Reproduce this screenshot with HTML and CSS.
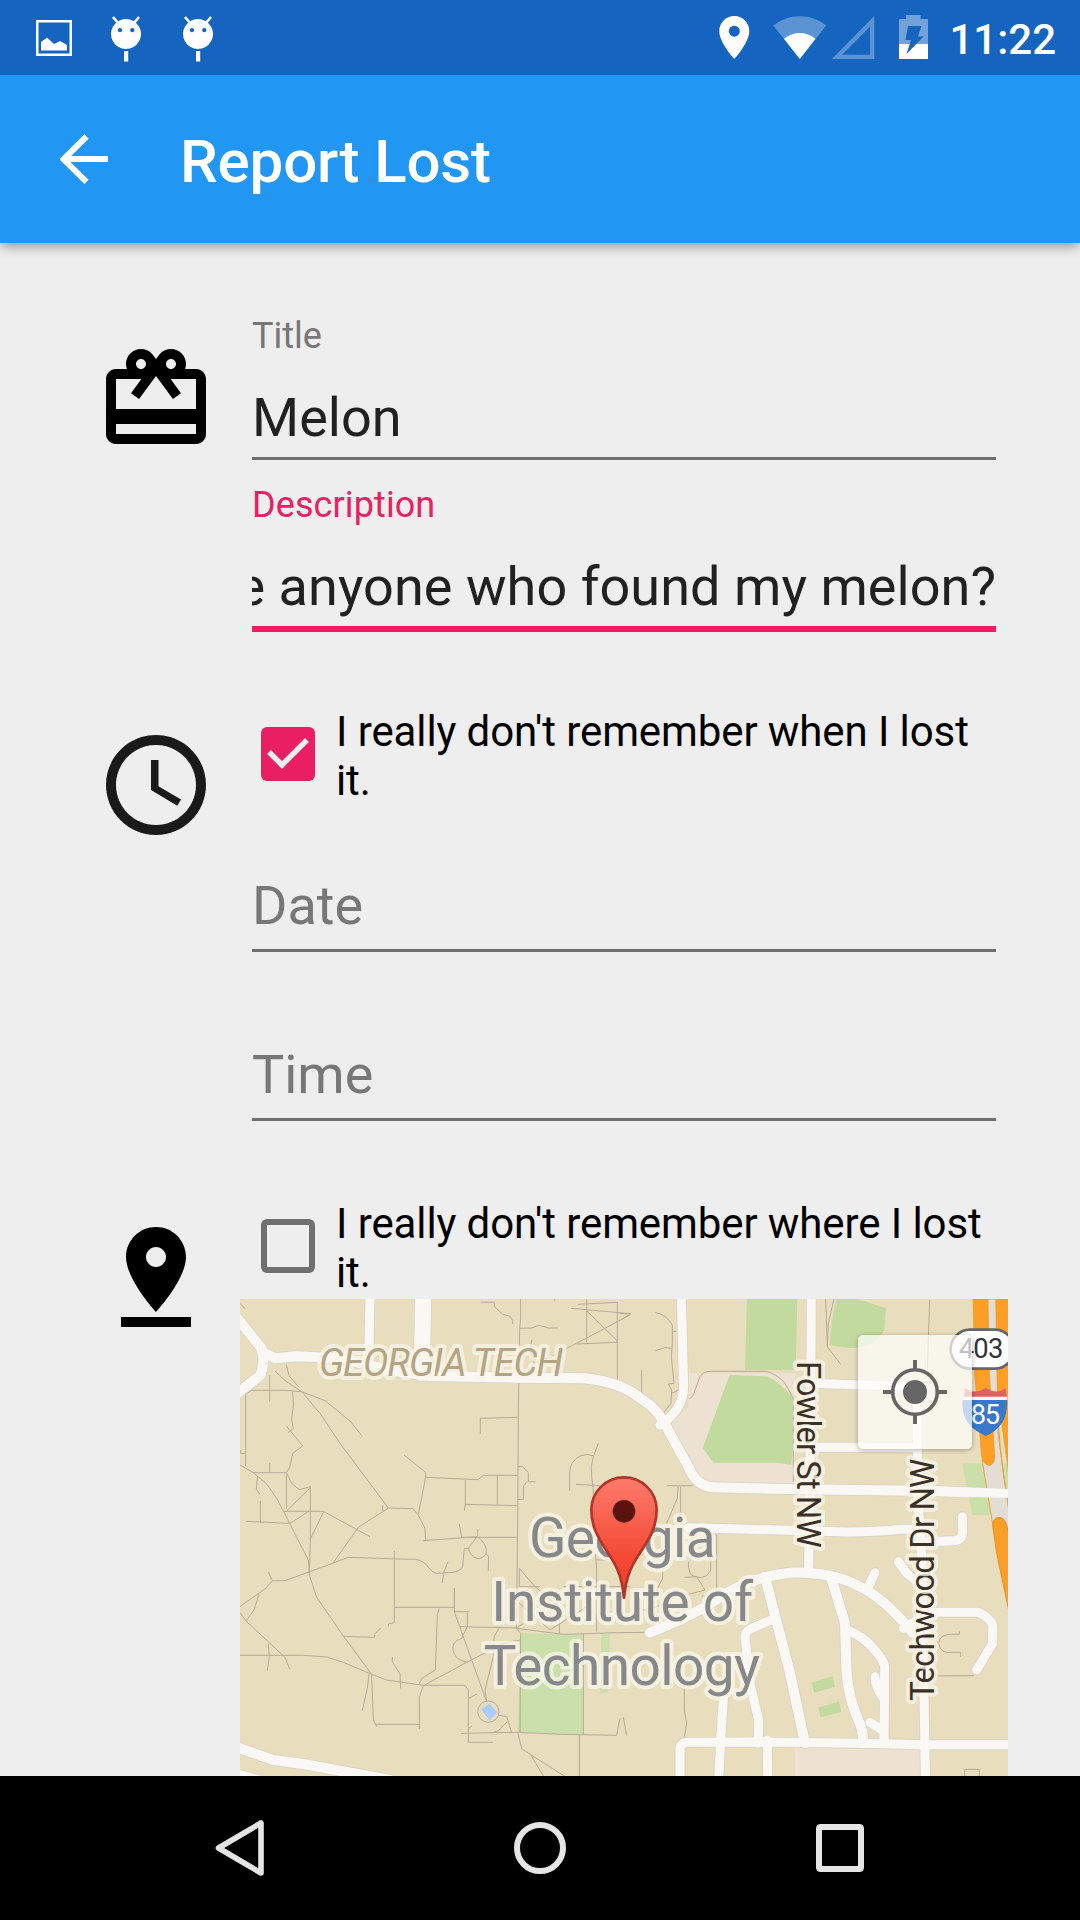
FILE: index.html
```html
<!DOCTYPE html>
<html lang="en">
<head>
<meta charset="utf-8">
<title>Report Lost</title>
<link rel="stylesheet" href="styles.css">
</head>
<body>
<div class="screen">
  <div class="status-bar">
    <div class="notifications">
      <svg width="36" height="36" viewBox="0 0 36 36"><path fill="#fff" fill-rule="evenodd" d="M0 0h36v36H0zM2.5 2.500v31h31v-31zM5 22l6-4.500 7 6.500 6-3 7 4v5.500H5z"/></svg>
      <svg class="debug" width="30" height="46" viewBox="0 0 30 46"><g fill="#fff"><path d="M2 1l5 6M28 1l-5 6" stroke="#fff" stroke-width="2.600"/><path fill-rule="evenodd" d="M15 3a15 15 0 1 0 .01 0zM9 12a2.100 2.100 0 1 1-.01 0zM21.300 12a2.100 2.100 0 1 1-.01 0z"/><path d="M13 35h4.200v10.500H13z"/></g></svg>
      <svg class="debug" width="30" height="46" viewBox="0 0 30 46"><g fill="#fff"><path d="M2 1l5 6M28 1l-5 6" stroke="#fff" stroke-width="2.600"/><path fill-rule="evenodd" d="M15 3a15 15 0 1 0 .01 0zM9 12a2.100 2.100 0 1 1-.01 0zM21.300 12a2.100 2.100 0 1 1-.01 0z"/><path d="M13 35h4.200v10.500H13z"/></g></svg>
    </div>
    <div class="indicators">
      <svg class="ind-pin" width="31" height="43" viewBox="0 0 31 43"><path fill="#fff" fill-rule="evenodd" d="M15.300 0C6.800 0 .3 6.700.3 15.200.3 26.500 15.300 43 15.300 43s15-16.500 15-27.800C30.300 6.700 23.800 0 15.300 0zm0 9.700a5.500 5.500 0 1 1 0 11 5.500 5.500 0 0 1 0-11z"/></svg>
      <svg class="ind-wifi" width="54" height="43" viewBox="0 0 54 43"><path fill="#fff" fill-opacity=".3" d="M.3 9.500C8 3.500 17 .2 26.800 .2S45.700 3.500 53.300 9.500L26.800 43z"/><path fill="#fff" d="M11 22.700c9.500-7.500 22-7.500 31.500 0L26.800 43z"/></svg>
      <svg class="ind-cell" width="43" height="43" viewBox="0 0 43 43"><path fill="#fff" fill-opacity=".3" fill-rule="evenodd" d="M0 43L42.300 0v43zM10 38.700h28V10.700z"/></svg>
      <svg class="ind-battery" width="29" height="44" viewBox="0 0 29 44"><path fill="#fff" fill-opacity=".4" d="M7 0h14.500v4H29v25H0V4h7z"/><path fill="#fff" d="M0 29h29v15H0z"/><path fill="#1565c0" d="M9 11h13.500L19 21.500h5.500L7.500 39l4.500-14H6.500z"/></svg>
      <span class="clock">11:22</span>
    </div>
  </div>

  <header class="app-bar">
    <svg class="back" width="48" height="50" viewBox="0 0 48 50"><path d="M48 25H5M26.500 2.500L3.500 25.300l23 22.500" fill="none" stroke="#fff" stroke-width="6"/></svg>
    <h1>Report Lost</h1>
  </header>

  <main class="form">
    <section class="section section-item">
      <svg class="section-icon" viewBox="0 0 24 24"><path d="M20 6h-2.180c.11-.31.18-.65.18-1 0-1.660-1.340-3-3-3-1.050 0-1.960.54-2.500 1.350l-.5.67-.5-.68C10.960 2.540 10.050 2 9 2 7.340 2 6 3.340 6 5c0 .35.07.69.18 1H4c-1.110 0-1.990.89-1.990 2L2 19c0 1.110.89 2 2 2h16c1.110 0 2-.89 2-2V8c0-1.110-.89-2-2-2zm-5-2c.55 0 1 .45 1 1s-.45 1-1 1-1-.45-1-1 .45-1 1-1zM9 4c.55 0 1 .45 1 1s-.45 1-1 1-1-.45-1-1 .45-1 1-1zm11 15H4v-2h16v2zm0-5H4V8h5.080L7 10.830 8.620 12 11 8.760l1-1.360 1 1.360L15.380 12 17 10.830 14.920 8H20v6z"/></svg>
      <div class="fields">
        <div class="field">
          <div class="label">Title</div>
          <div class="value">Melon</div>
        </div>
        <div class="field focused">
          <div class="label">Description</div>
          <div class="value">e anyone who found my melon?</div>
        </div>
      </div>
    </section>

    <section class="section section-when">
      <svg class="section-icon soft" viewBox="0 0 24 24"><path d="M11.990 2C6.470 2 2 6.480 2 12s4.470 10 9.990 10C17.520 22 22 17.520 22 12S17.520 2 11.990 2zM12 20c-4.420 0-8-3.580-8-8s3.580-8 8-8 8 3.580 8 8-3.580 8-8 8zm.5-13H11v6l5.250 3.150.75-1.230-4.500-2.670z"/></svg>
      <div class="fields">
        <div class="check-row">
          <svg class="box" width="54" height="54" viewBox="0 0 54 54"><rect width="54" height="54" rx="6" fill="#e91e63"/><path d="M8 25l13 13L46 13" fill="none" stroke="#eee" stroke-width="5.500"/></svg>
          <div class="check-text">I really don't remember when I lost it.</div>
        </div>
        <div class="field field-date"><div class="value hint">Date</div></div>
        <div class="field"><div class="value hint">Time</div></div>
      </div>
    </section>

    <section class="section section-where">
      <svg class="section-icon" viewBox="0 0 24 24"><path d="M18 8c0-3.310-2.690-6-6-6S6 4.690 6 8c0 4.500 6 11 6 11s6-6.500 6-11zm-8 0c0-1.100.9-2 2-2s2 .9 2 2-.89 2-2 2c-1.100 0-2-.9-2-2zM5 20v2h14v-2H5z"/></svg>
      <div class="fields">
        <div class="check-row">
          <div class="box box-empty"></div>
          <div class="check-text">I really don't remember where I lost it.</div>
        </div>
        <div class="map">
          <svg class="map-canvas" viewBox="30 27 2304 1431" width="768" height="477">
            <defs>
              <linearGradient id="pin" x1="0" y1="0" x2="0" y2="1"><stop offset="0" stop-color="#fd7b6c"/><stop offset=".65" stop-color="#f44a36"/><stop offset="1" stop-color="#f03a28"/></linearGradient>
              <g id="streets">
                <path class="st-l" d="M10 70L95 175Q105 215 92 255L10 320"/>
                <path class="st-l" d="M95 185L135 205L200 199L330 205L400 222L500 244L600 258L860 263L1060 265Q1150 272 1210 310L1260 345Q1290 370 1320 430L1375 530Q1400 590 1450 592L1720 598L2110 603L2340 612"/>
                <path d="M420 20L418 110L416 225"/>
                <path class="st-xl" d="M579 20L578 110L575 250"/>
                <path d="M1354 20L1361 290Q1360 360 1290 405"/>
                <path d="M1744 20L1743 180L1739 600L1736 840"/>
                <path d="M1740 280L2060 290"/>
                <path d="M1740 472L2050 472"/>
                <path d="M2062 290L2062 600L2075 800L2086 1460"/>
                <path d="M1375 713L1500 716L1850 726Q1940 726 2010 718L2070 718L2068 756L2170 752Q2200 752 2197 720L2197 680"/>
                <path class="st-l" d="M1260 1028Q1400 970 1450 935Q1550 862 1680 848Q1800 845 1880 885Q1960 920 2050 1030"/>
                <path d="M1910 900L1935 848M2005 815L2030 850Q2050 868 2075 880"/>
                <path d="M2020 1015L2080 980L2110 967L2245 967Q2288 990 2288 1010L2288 1060L2240 1140"/>
                <path class="st-l" d="M1605 860L1680 1150L1725 1360"/>
                <path d="M1635 985L1565 1015Q1545 1025 1545 1040L1560 1180L1586 1290L1585 1360"/>
                <path class="st-l" d="M1805 868L1845 1000L1850 1150Q1855 1220 1885 1290Q1900 1320 1900 1360"/>
                <path d="M1850 1020Q1900 1040 1925 1070Q1962 1110 1964 1130L1962 1360M1935 1160Q1935 1190 1960 1225M1920 1297L1955 1320"/>
                <path d="M1482 1200L1472 1350L1466 1470M1612 1350L1613 1470M1350 1470L1350 1375Q1352 1358 1375 1357L1600 1356L1880 1360L2090 1364L2340 1364"/>
                <path class="st-l" d="M10 1368L130 1410L220 1422L480 1470"/>
                <path class="st-l" d="M-10 1445L120 1480"/>
              </g>
            </defs>
            <rect x="30" y="27" width="2304" height="1431" fill="#e8ddbd"/>
            <path fill="#ede2d1" d="M1375 250H1695V585H1430L1380 545 1305 420 1375 350zM1695 1374H2070V1460H1695z"/>
            <g fill="#c3da9e">
              <path d="M1551 27H1702L1697 240H1545zM1820 27H1880L1968 54 1962 120Q1935 175 1860 174L1800 166Q1803 90 1820 27zM1499 255L1610 259Q1650 275 1690 325L1692 440 1684 525 1640 518H1450L1418 473zM1745 1178L1808 1158 1815 1190 1753 1208zM1765 1253L1827 1234 1834 1266 1772 1282z"/>
            </g>
            <g fill="#cbdfaa">
              <path d="M872 1030L1060 1034 1060 1333 863 1327zM1114 1032H1140L1134 1209H1110zM2197 521H2340V675H2228z"/>
            </g>
            <path fill="#aaccff" d="M753 1258L778 1241 802 1267 779 1291z"/>

            <g class="footpath">
              <path d="M30 40L45 56M752 37H793V50L818 73L840 79L848 92V102M872 27V85L869 115L865 360L863 700L859 1015L872 1030M869 115L905 114L928 106L955 114H984M974 27V33M1023 55L1080 60L1200 71M1044 43L1162 37V267M1070 27V158M1070 62L1162 153V157L1040 162M1200 75L1030 165L960 203L915 210L900 185L905 150M910 200L912 225L935 205"/>
              <path d="M119 255V335M47 530V312L65 301H165L215 305L285 332L360 393L395 437M135 243L165 272L215 305L270 370L330 460L475 654M169 225L177 257L205 290M188 305L190 345L185 390L190 415L175 428M169 408L218 468L188 490L180 530L169 548H70L30 525M32 480V490H47M119 519V547M169 548V656M70 548L110 582L140 625L165 672L200 742L235 810L238 855L260 922L340 1038L425 1153L470 1170L580 1186H705L715 1200V1357H789"/>
              <path d="M169 548L185 580L208 599L241 590V750L238 855M241 593L170 663M82 558L79 598L89 612M91 632V697M48 694L180 700L235 665M160 664H280L420 740M280 667L240 750M458 646V664M475 654L385 712L310 818M475 654L548 656L565 675L585 715L587 750M522 495L587 547V562L745 569L760 556H862M587 562L565 672M706 569V643L862 647M706 643L703 662M802 556V643M751 432V385L862 382M863 530L878 530L895 548V575H917M890 575L880 590V628H863"/>
              <path d="M688 702L695 742H859M743 717V740M580 752L743 740Q770 760 769 788Q762 805 743 806Q720 800 715 775L740 742M715 776L703 775L698 830Q690 846 660 848L620 850Q605 847 590 825Q570 805 540 808L355 802L240 845L165 872H127L115 846M127 872L107 895L30 950M30 968L48 993L72 960L87 912M48 993L165 1102L179 1137M115 1062L118 1100L112 1142M30 1096H220L290 1101L340 1117L425 1153M493 783V998L475 1002V1010M452 1014L436 1030L433 1042L340 1039M654 816L640 850L637 880M775 843L776 800L769 790"/>
              <path d="M493 952H673V894V965L768 1230M628 955L622 975L616 1140L575 1165L568 1182M673 965H718M712 968V1010L695 1045Q665 1055 669 1080Q675 1112 712 1116M690 1010L860 1014L880 1000M580 1187L712 1116L820 1060L870 1050M808 1014L792 1040L790 1100L765 1200L770 1235M417 1153L412 1195L397 1262M425 1153L430 1290L440 1310M437 1303H568V1316V1220L580 1187M487 1101V1116L510 1152L512 1195M715 1226L740 1212M693 1330L860 1327L1000 1333L1160 1336L1170 1285M1180 1282L1190 1337M715 1318L725 1308M790 1327L805 1322L832 1295M805 1275L830 1280L845 1327M863 1327L875 1376L902 1394L940 1458M902 1394L1003 1458M1048 1335V1458M872 1030L870 1327M1060 1032V1333M859 1015L1000 1033L1160 1028L1260 1027M868 835L915 890L988 950V1030M868 835V890H930M868 940L960 1020L1070 950"/>
              <circle cx="775" cy="1265" r="32"/>
              <path d="M1105 460L1090 500Q1080 530 1085 560L1090 600V700L1100 840V1025M1090 497Q1070 490 1050 498Q1018 515 1019 550V602M1038 583L1110 587M1100 810H1180M1000 890H1200"/>
              <path d="M1170 71L1202 71L1175 88M1276 67Q1310 75 1327 105V160L1324 200L1332 280L1315 282L1325 300L1323 340L1290 383M1327 124H1340M1276 182L1305 173L1324 175M1235 240V316M1325 310L1345 300M1378 326Q1392 320 1395 300L1410 260Q1418 246 1440 244H1610Q1645 255 1665 280L1690 325V575M1787 27L1792 170L1832 223M1812 27L1795 100L1792 170M2099 30L2092 240M1310 587H1390M1344 590L1342 625L1310 700M1352 590V700L1460 735V920"/>
              <path d="M1376 815Q1372 855 1395 860Q1430 870 1442 840V815M1363 862L1400 860L1425 900L1360 917M1415 918H1450M1298 840V865L1280 900L1315 940L1240 960L1300 985M1363 1180V1260L1370 1300L1363 1340M2188 1024V1033H2160Q2128 1035 2126 1060Q2130 1084 2150 1087H2192V1101M2110 1158L2232 1157M2204 1460V1438H2248V1460"/>
            </g>

            <use href="#streets" class="casing"/>
            <use href="#streets" class="surface"/>
            <path d="M107 215l4 5-5 5z" fill="#e2d9bb"/>

            <g>
              <path d="M2262 27H2334V600L2334 720H2300L2258 530z" fill="#e8ddbd"/>
              <path d="M2197 521H2340V675H2228z" fill="#cbdfaa"/>
              <path d="M2272 27H2300L2304 430 2340 690V780L2290 715 2258 520z" fill="#e3ddd5" stroke="#eba535" stroke-width="3"/>
              <path d="M2305 400Q2315 550 2336 640" fill="none" stroke="#eba535" stroke-width="3"/>
              <path d="M2200 592L2336 597V624L2200 620z" fill="#faf8f5"/>
              <path d="M2229 20L2234 250 2255 500Q2262 527 2280 526 2296 520 2294 495L2278 250 2274 20z" fill="#fc9f27" stroke="#ec981f" stroke-width="2"/>
              <path d="M2297 20H2336V550L2318 420 2302 300z" fill="#fc9f27" stroke="#ec981f" stroke-width="2"/>
              <path d="M2288 705Q2290 682 2310 682 2328 684 2336 730V960L2300 790z" fill="#fc9f27" stroke="#e7921c" stroke-width="3"/>
            </g>

            <rect x="2162" y="119" width="190" height="117" rx="58" fill="#fff" stroke="#666" stroke-width="8"/>
            <text class="route" x="2186" y="205" textLength="134" fill="#333">403</text>
            <path d="M2205 295Q2230 315 2267 294 2302 315 2326 295L2332 330H2200z" fill="#da6262"/>
            <path d="M2201 320h131v10h-133z" fill="#fff"/>
            <path d="M2198 330H2331Q2336 408 2267 438 2190 405 2198 330z" fill="#3a78c9"/>
            <text class="route" x="2222" y="402" textLength="88" fill="#fff">85</text>

            <text class="district" x="267" y="258" textLength="732">GEORGIA TECH</text>
            <text class="street" transform="translate(1701 213) rotate(90)" textLength="560">Fowler St NW</text>
            <text class="street" transform="translate(2111 1232) rotate(-90)" textLength="726">Techwood Dr NW</text>
            <g class="place">
              <text x="897" y="800" textLength="560">Georgia</text>
              <text x="784" y="992" textLength="785">Institute of</text>
              <text x="761" y="1185" textLength="829">Technology</text>
            </g>

            <path d="M1182 926C1176 850 1155 820 1125 775 1100 735 1084 705 1084 660A98 98 0 0 1 1280 660C1280 705 1264 735 1239 775 1209 820 1188 850 1182 926z" fill="url(#pin)" stroke="#b13529" stroke-width="8"/>
            <circle cx="1182" cy="664" r="34" fill="#5a130d"/>
          </svg>
          <div class="locate">
            <svg width="64" height="64" viewBox="-32 -32 64 64"><circle r="12" fill="#666"/><circle r="22.300" fill="none" stroke="#666" stroke-width="3.600"/><path d="M0-32v9M0 23v9M-32 0h9M23 0h9" stroke="#666" stroke-width="4"/></svg>
          </div>
        </div>
      </div>
    </section>
  </main>

  <nav class="nav-bar">
    <svg width="60" height="60" viewBox="-30 -30 60 60"><path d="M-21.500 0L21-25V25z" fill="none" stroke="#e5e5e5" stroke-width="5.600" stroke-linejoin="round"/></svg>
    <svg width="60" height="60" viewBox="-30 -30 60 60"><circle r="23" fill="none" stroke="#e5e5e5" stroke-width="6"/></svg>
    <svg width="60" height="60" viewBox="-30 -30 60 60"><rect x="-21" y="-21" width="42" height="42" rx="1.500" fill="none" stroke="#e5e5e5" stroke-width="6"/></svg>
  </nav>
</div>
</body>
</html>
```
FILE: styles.css
```css
* {
  box-sizing: border-box;
}

body {
  margin: 0;
  font-family: Roboto, "Noto Sans", sans-serif;
}

svg {
  display: block;
  flex: none;
}

.screen {
  width: 1080px;
  height: 1920px;
  display: flex;
  flex-direction: column;
  overflow: hidden;
  background: #eee;
}

/* Status bar */
.status-bar {
  flex: none;
  height: 75px;
  padding: 0 24px 0 36px;
  display: flex;
  justify-content: space-between;
  position: relative;
  z-index: 1;
  background: #1565c0;
  color: #fff;
}

.notifications,
.indicators {
  display: flex;
  align-items: flex-start;
}

.notifications {
  padding-top: 20px;
  gap: 42px;
}

.notifications svg:nth-child(2) {
  margin-left: -3px;
}

.debug {
  margin-top: -4px;
}

.indicators {
  padding-top: 16px;
}

.ind-wifi {
  margin-left: 23px;
}

.ind-cell {
  margin-left: 5px;
}

.ind-battery {
  margin: -1px 0 0 24px;
}

.clock {
  margin: -1px 0 0 21px;
  font-size: 42px;
  line-height: 49px;
  font-weight: 500;
}

/* App bar */
.app-bar {
  flex: none;
  height: 168px;
  padding-left: 60px;
  display: flex;
  align-items: center;
  position: relative;
  background: #2196f3;
  box-shadow: 0 3px 12px rgba(0, 0, 0, 0.4);
}

.back {
  margin-bottom: 1px;
}

.app-bar h1 {
  margin: 5px 0 0 72px;
  color: #fff;
  font-size: 60px;
  line-height: 70px;
  font-weight: 500;
  letter-spacing: -0.15px;
}

/* Form */
.form {
  flex: 1;
  min-height: 0;
  padding: 56px 72px 0 96px;
}

.section {
  display: flex;
  gap: 24px;
}

.section-icon {
  width: 120px;
  height: 120px;
  margin-top: 18px;
  fill: #000;
}

.section-icon.soft {
  fill: #1a1a1a;
}

.section-item .section-icon {
  margin-top: 40px;
}

.section-when {
  margin-top: 70px;
}

.section-where {
  margin-top: 70px;
}

.fields {
  flex: 1;
  min-width: 0;
}

.field {
  height: 169px;
  padding: 0 12px 8px;
  display: flex;
  flex-direction: column;
  justify-content: flex-end;
}

.field-date {
  height: 155px;
}

.label {
  color: #777;
  font-size: 36px;
  line-height: 42px;
}

.value {
  height: 88px;
  padding-top: 10px;
  display: flex;
  overflow: hidden;
  white-space: nowrap;
  border-bottom: 3px solid #6f6f6f;
  color: #212121;
  font-size: 54px;
  line-height: 63px;
}

.label + .value {
  margin-top: 15px;
  padding-top: 14px;
}

.focused .label {
  color: #e91e63;
  letter-spacing: 0.1px;
}

.focused {
  padding-bottom: 5px;
}

.focused .value {
  height: 91px;
  justify-content: flex-end;
  border-bottom: 6px solid #e91e63;
  letter-spacing: 0.05px;
}

.hint {
  color: #777;
}

/* Checkbox rows */
.check-row {
  height: 100px;
  padding: 0 12px 0 21px;
  display: flex;
  gap: 21px;
}

.section-when .check-row {
  height: 98px;
}

.box {
  flex: none;
  width: 54px;
  height: 54px;
  margin-top: 20px;
}

.box-empty {
  border: 6px solid #707070;
  border-radius: 6px;
}

.check-text {
  color: #000;
  font-size: 42px;
  line-height: 49px;
  letter-spacing: -0.1px;
}

/* Map */
.map {
  position: relative;
  width: 768px;
  height: 477px;
}

.footpath {
  fill: none;
  stroke: #b7ab95;
  stroke-width: 3;
}

#streets path {
  fill: none;
  stroke-linecap: round;
  stroke-linejoin: round;
  stroke-width: calc(27px + var(--edge));
}

#streets .st-l {
  stroke-width: calc(30px + var(--edge));
}

#streets .st-xl {
  stroke-width: calc(48px + var(--edge));
}

.casing {
  --edge: 5px;
  stroke: #d9d4c6;
}

.surface {
  --edge: 0px;
  stroke: #faf8f5;
}

.map-canvas text {
  paint-order: stroke;
  stroke-linejoin: round;
}

.map-canvas .route {
  font-size: 82px;
}

.district,
.street,
.place {
  stroke: rgba(250, 246, 235, 0.72);
  stroke-width: 24px;
}

.district {
  fill: #b3a584;
  font-size: 115px;
  font-style: italic;
}

.street {
  fill: #3b3026;
  font-size: 99px;
}

.place {
  fill: #86888a;
  font-size: 165px;
}

.locate {
  position: absolute;
  left: 618px;
  top: 36px;
  width: 114px;
  height: 114px;
  display: flex;
  align-items: center;
  justify-content: center;
  border-radius: 5px;
  background: rgba(255, 255, 255, 0.7);
  box-shadow: 0 1px 5px rgba(0, 0, 0, 0.3);
}

/* System navigation */
.nav-bar {
  flex: none;
  position: relative;
  height: 144px;
  padding: 0 210px;
  display: flex;
  align-items: center;
  justify-content: space-between;
  background: #000;
}
```
